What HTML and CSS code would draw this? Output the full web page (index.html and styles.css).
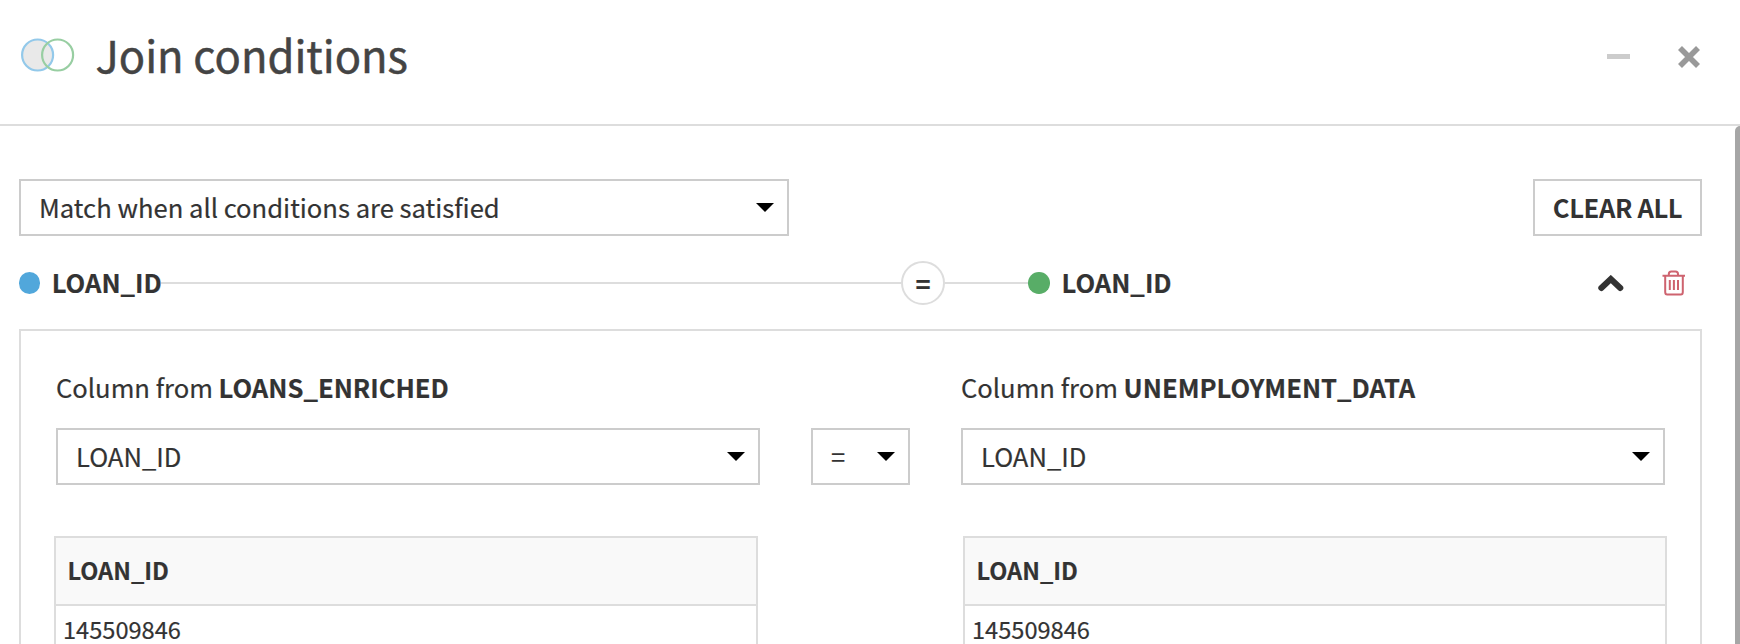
FILE: index.html
```html
<!DOCTYPE html>
<html lang="en">
<head>
<meta charset="utf-8">
<title>Join conditions</title>
<link rel="stylesheet" href="styles.css">
</head>
<body>
<div class="modal">
  <header class="modal-header">
    <svg class="join-icon" width="54" height="34" viewBox="0 0 54 34" fill="none" stroke-width="2.200">
      <circle cx="16.6" cy="17" r="15.5" fill="#e9e9e9" stroke="#93c9ea"/>
      <circle cx="36.6" cy="17" r="15.5" stroke="#98cea2"/>
    </svg>
    <h1 class="modal-title">Join conditions</h1>
    <div class="window-actions">
      <span class="minimize"></span>
      <svg class="close" width="22" height="22" viewBox="0 0 22 22" stroke="#999" stroke-width="5.6"><path d="M2 2L20 20M20 2L2 20"/></svg>
    </div>
  </header>
  <main class="modal-body">
    <div class="content">
      <div class="toolbar">
        <div class="select select-mode"><span>Match when all conditions are satisfied</span><i class="caret"></i></div>
        <button class="clear">CLEAR ALL</button>
      </div>
      <div class="condition">
        <span class="dot dot-left"></span>
        <span class="column-name">LOAN_ID</span>
        <span class="line line-long"></span>
        <span class="operator"><span>=</span></span>
        <span class="line line-short"></span>
        <span class="dot dot-right"></span>
        <span class="column-name">LOAN_ID</span>
        <div class="condition-actions">
          <svg width="26" height="17" viewBox="0 0 26 17" fill="none" stroke="#333" stroke-width="6" stroke-linecap="round"><path d="M3.3 13L12.8 4L22.3 13" stroke-linejoin="miter"/></svg>
          <svg width="24" height="26" viewBox="0 0 24 26" fill="none" stroke="#ce636f" stroke-width="2"><path d="M.5 5.8H23M6.800 5.500V4Q6.800 1.500 9.300 1.500H13.500Q16 1.500 16 4V5.500M3.200 6V22Q3.200 24.500 5.200 24.500H18.800Q20.800 24.500 20.800 22V6M7.800 10V20M11.900 10V20M16 10V20"/></svg>
        </div>
      </div>
      <section class="panel">
        <div class="fields">
          <div class="field">
            <div class="label">Column from <b>LOANS_ENRICHED</b></div>
            <div class="select"><span>LOAN_ID</span><i class="caret"></i></div>
          </div>
          <div class="select select-operator"><span>=</span><i class="caret"></i></div>
          <div class="field">
            <div class="label">Column from <b>UNEMPLOYMENT_DATA</b></div>
            <div class="select"><span>LOAN_ID</span><i class="caret"></i></div>
          </div>
        </div>
        <div class="previews">
          <div class="preview"><div class="preview-head">LOAN_ID</div><div class="preview-cell">145509846</div></div>
          <div class="preview"><div class="preview-head">LOAN_ID</div><div class="preview-cell">145509846</div></div>
        </div>
      </section>
    </div>
    <div class="scrollbar"></div>
  </main>
</div>
</body>
</html>
```
FILE: styles.css
```css
* { box-sizing: border-box; }
body {
  margin: 0;
  overflow: hidden;
  background: #fff;
  color: #333;
  font: 25.6px/36px "Noto Sans CJK SC", "Noto Sans", sans-serif;
  -webkit-text-stroke: .2px currentColor;
}
.modal { display: flex; flex-direction: column; height: 644px; overflow: hidden; }
.modal-header {
  display: flex;
  flex: none;
  height: 126px;
  padding: 0 40px 0 21px;
  border-bottom: 2px solid #ddd;
}
.join-icon { flex: none; margin-top: 37.500px; }
.modal-title {
  margin: 23px 0 0 20.500px;
  color: #444;
  font-size: 43.5px;
  line-height: 64px;
  font-weight: 400;
  white-space: nowrap;
  -webkit-text-stroke-width: .5px;
}
.window-actions { display: flex; gap: 48px; margin: 46px 0 0 auto; }
.minimize { width: 23px; height: 5px; margin-top: 8px; background: #ccc; }
.modal-body { display: flex; flex: 1; min-height: 0; }
.content { width: 1683px; margin: 53px 33px 0 19px; flex: none; }
.scrollbar { width: 5px; background: #a6a6a6; border-top-left-radius: 5px; }
.toolbar { display: flex; justify-content: space-between; }
.select {
  display: flex;
  justify-content: space-between;
  height: 57px;
  padding: 8px 13px 0 18px;
  border: 2px solid #ccc;
  white-space: nowrap;
}
.select-mode { width: 770px; }
.caret {
  width: 18px;
  height: 9px;
  margin-top: 14px;
  background: #000;
  clip-path: polygon(0 0, 100% 0, 50% 100%);
}
.clear {
  width: 169px;
  height: 57px;
  padding: 0 0 2px;
  border: 2px solid #ccc;
  background: #fff;
  color: #333;
  font: inherit;
  font-weight: 700;
  letter-spacing: -.4px;
  white-space: nowrap;
  -webkit-text-stroke-width: 0;
}
.condition { display: flex; align-items: center; height: 44px; margin-top: 25px; }
.dot { flex: none; width: 21.500px; height: 21.500px; border-radius: 50%; }
.dot-left { background: #51a7db; margin-left: -.4px; }
.dot-right { background: #58ad67; margin-left: -.6px; }
.column-name { flex: none; width: 109px; margin: -2px 0 0 11.700px; font-weight: 700; }
.line { flex: none; height: 2px; background: #ddd; }
.line-long { width: 740.200px; }
.line-short { width: 84px; }
.operator {
  display: flex;
  flex: none;
  align-items: center;
  justify-content: center;
  width: 44px;
  height: 44px;
  border: 2px solid #ddd;
  border-radius: 50%;
  font-weight: 700;
}
.condition-actions { display: flex; align-items: center; gap: 38px; margin: 0 16.500px 0 auto; }
.panel { height: 400px; margin-top: 24px; border: 2px solid #ddd; }
.fields { display: flex; align-items: flex-end; justify-content: space-between; padding: 38px 35px 0; }
.field { width: 704px; }
.label { height: 59px; white-space: nowrap; }
.select-operator { width: 99px; }
.previews { display: flex; justify-content: space-between; margin: 51px 33px 0; font-size: 23.6px; }
.preview { width: 704px; height: 200px; border: 2px solid #ddd; }
.preview-head {
  height: 68px;
  padding: 14px 11.500px 0;
  border-bottom: 2px solid #ddd;
  background: #f9f9f9;
  font-weight: 700;
}
.preview-cell { padding: 5px 7px 0; }
```
